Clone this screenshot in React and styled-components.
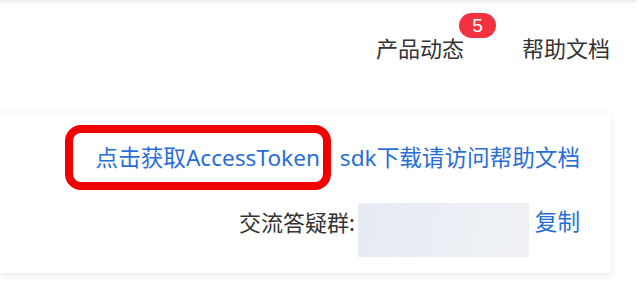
import React from "react";
import styled, { createGlobalStyle } from "styled-components";

const GlobalStyle = createGlobalStyle`
  html, body {
    margin: 0;
    padding: 0;
    background: #ffffff;
  }
  body {
    font-family: "Noto Sans", "Noto Sans CJK SC", sans-serif;
    overflow: hidden;
  }
`;

const Page = styled.div`
  width: 641px;
  height: 290px;
  display: flex;
  flex-direction: column;
`;

const TopShade = styled.div`
  width: 636px;
  height: 4px;
  background: linear-gradient(#ebebeb, #fdfdfd);
  border-bottom-right-radius: 6px;
`;

const Header = styled.div`
  height: 88px;
  display: flex;
  justify-content: flex-end;
  align-items: center;
  gap: 58px;
  padding-right: 31px;
`;

const NavItem = styled.span`
  position: relative;
  font-size: 22px;
  line-height: 30px;
  color: #333333;
`;

const Badge = styled.span`
  position: absolute;
  top: -20px;
  right: -32px;
  height: 25px;
  min-width: 13px;
  padding: 0 12px;
  border-radius: 13px;
  background: #f0333f;
  color: #ffffff;
  font-family: "Liberation Sans", sans-serif;
  font-size: 19px;
  line-height: 25px;
  text-align: center;
`;

const Card = styled.div`
  margin-top: 21px;
  width: 611px;
  height: 160px;
  box-sizing: border-box;
  background: #ffffff;
  box-shadow: 0 2px 8px rgba(0, 0, 0, 0.09);
  padding: 12px 31px 16px 0;
  display: flex;
  flex-direction: column;
  align-items: flex-end;
  gap: 13px;
`;

const Row = styled.div`
  display: flex;
  justify-content: flex-end;
  align-items: ${(props) => (props.top ? "flex-start" : "center")};
`;

const Link = styled.span`
  font-size: 22.6px;
  line-height: 38px;
  color: #286ed7;
  white-space: nowrap;
`;

const Highlight = styled.span`
  display: flex;
  align-items: center;
  height: 49px;
  padding: 0 3px 0 23px;
  border: 8px solid #f20000;
  border-radius: 16px;
  margin-right: 9px;
`;

const Label = styled.span`
  font-size: 22px;
  line-height: 38px;
  color: #333333;
  white-space: nowrap;
`;

const Masked = styled.div`
  width: 171px;
  height: 54px;
  margin: 0 6px 0 3px;
  background: linear-gradient(100deg, #e6ebf4 0%, #eceff4 55%, #eff1f4 100%);
`;

function App() {
  return (
    <Page>
      <GlobalStyle />
      <TopShade />
      <Header>
        <NavItem>
          产品动态
          <Badge>5</Badge>
        </NavItem>
        <NavItem>帮助文档</NavItem>
      </Header>
      <Card>
        <Row>
          <Highlight>
            <Link>点击获取AccessToken</Link>
          </Highlight>
          <Link>sdk下载请访问帮助文档</Link>
        </Row>
        <Row top>
          <Label>交流答疑群:</Label>
          <Masked />
          <Link>复制</Link>
        </Row>
      </Card>
    </Page>
  );
}

export default App;
